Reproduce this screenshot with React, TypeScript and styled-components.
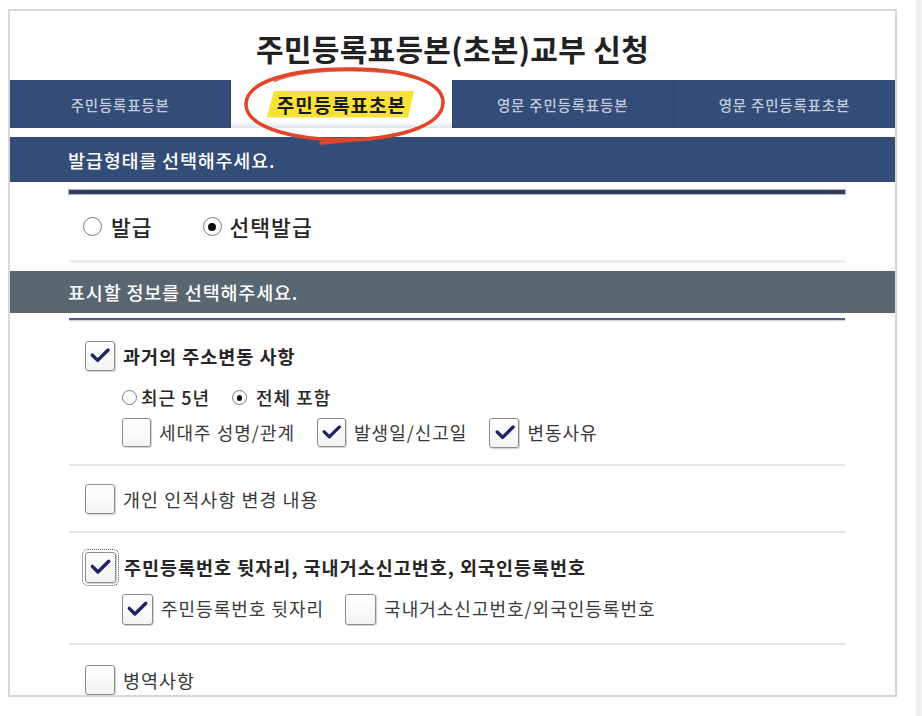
import styled, { createGlobalStyle } from "styled-components";

const GlobalStyle = createGlobalStyle`
  html, body {
    margin: 0;
    padding: 0;
    background: #fff;
  }
  body {
    font-family: "Noto Sans CJK KR", "Noto Sans", sans-serif;
    color: #333;
  }
`;

const Page = styled.div`
  width: 922px;
  height: 716px;
  display: flex;
  overflow: hidden;
  background: #fff;
`;

const Frame = styled.div`
  position: relative;
  box-sizing: border-box;
  margin: 9px 0 0 8px;
  width: 889px;
  height: 688px;
  border: 2px solid #d8d8d8;
  overflow: hidden;
  background: #fff;
`;

const ScrollStrip = styled.div`
  margin-left: 19px;
  width: 6px;
  height: 100%;
  background: #f1f1f1;
`;

const Title = styled.h1`
  margin: 0;
  box-sizing: border-box;
  height: 69px;
  padding-top: 4px;
  display: flex;
  align-items: center;
  justify-content: center;
  font-size: 30px;
  font-weight: 700;
  letter-spacing: 0.3px;
  color: #222;
`;

const Tabs = styled.div`
  display: grid;
  grid-template-columns: repeat(4, 1fr);
  height: 48px;
`;

const Tab = styled.div<{ $active?: boolean }>`
  display: flex;
  align-items: center;
  justify-content: center;
  font-size: 14.5px;
  font-weight: 500;
  letter-spacing: 0.8px;
  color: #c3cbd9;
  background: ${(p) => (p.$active ? "#fff" : "#344d78")};
  border-right: 1px solid #2d4470;
  box-shadow: ${(p) =>
    p.$active ? "inset 0 -7px 6px -5px #d3d9e3" : "none"};
  &:last-child {
    border-right: none;
  }
`;

const Highlight = styled.span`
  padding: 0 8px 0 10px;
  margin-left: -2px;
  background: #f8e23a;
  clip-path: polygon(5% 0, 100% 0, 96% 100%, 0 100%);
  color: #1b1b1b;
  font-size: 19px;
  font-weight: 700;
  letter-spacing: 1px;
`;

const CircleMark = styled.svg`
  position: absolute;
  left: 225px;
  top: 50px;
  width: 220px;
  height: 95px;
  pointer-events: none;
`;

const SectionBar = styled.div<{ $tone: "navy" | "slate" }>`
  box-sizing: border-box;
  height: ${(p) => (p.$tone === "navy" ? 45 : 42)}px;
  margin-top: ${(p) => (p.$tone === "navy" ? 9 : 8)}px;
  padding-left: 58px;
  display: flex;
  align-items: center;
  background: ${(p) => (p.$tone === "navy" ? "#344d78" : "#59656f")};
  color: #fff;
  font-size: 18.5px;
  font-weight: 500;
  letter-spacing: 0.8px;
`;

const Content = styled.div`
  margin: 0 50px 0 59px;
`;

const ThickRule = styled.div`
  margin-top: 8px;
  height: 4px;
  background: #2f3e5a;
  box-shadow: 0 0 1px 1px #b7becb;
`;

const NavyRule = styled.div`
  margin-top: 5px;
  height: 2px;
  background: #4a5f87;
  box-shadow: 0 1px 1px #c4cddc;
`;

const LightRule = styled.div`
  height: 3px;
  background: #ececec;
`;

const TypeRow = styled.div`
  height: 66px;
  padding-left: 14px;
  display: flex;
  align-items: center;
  gap: 50px;
`;

const Item = styled.div<{ $top: number; $bottom: number }>`
  display: flex;
  flex-direction: column;
  align-items: flex-start;
  padding: ${(p) => p.$top}px 0 ${(p) => p.$bottom}px 16px;
  border-bottom: 2px solid #e6e6e6;
  &:last-child {
    border-bottom: none;
  }
`;

const Option = styled.label<{ $gap: number }>`
  display: flex;
  align-items: center;
  gap: ${(p) => p.$gap}px;
  line-height: 1.2;
`;

const OptionText = styled.span<{ $size: number; $weight?: number }>`
  font-size: ${(p) => p.$size}px;
  font-weight: ${(p) => p.$weight ?? 400};
  letter-spacing: 1px;
  color: ${(p) => ((p.$weight ?? 400) > 400 ? "#262626" : "#3a3a3a")};
`;

const SubOptions = styled.div`
  padding-left: 37px;
  display: flex;
  flex-direction: column;
`;

const SubRow = styled.div<{ $top: number; $gap: number }>`
  margin-top: ${(p) => p.$top}px;
  display: flex;
  align-items: center;
  gap: ${(p) => p.$gap}px;
`;

const Box = styled.span<{ $size: number; $focus?: boolean }>`
  box-sizing: border-box;
  flex: none;
  width: ${(p) => p.$size}px;
  height: ${(p) => p.$size}px;
  border: 1.5px solid #8c8c8c;
  border-radius: 3px;
  background: linear-gradient(#ffffff, #f4f4f4);
  box-shadow: 1px 1px 1px #d0d0d0;
  display: flex;
  align-items: center;
  justify-content: center;
  outline: ${(p) => (p.$focus ? "1.5px dotted #555" : "none")};
  outline-offset: 2px;
  svg {
    width: 78%;
    height: 78%;
  }
`;

const RadioDot = styled.span<{ $size: number; $on?: boolean }>`
  box-sizing: border-box;
  flex: none;
  width: ${(p) => p.$size}px;
  height: ${(p) => p.$size}px;
  border-radius: 50%;
  border: 1.5px solid #7a7a7a;
  background: #fff;
  display: flex;
  align-items: center;
  justify-content: center;
  &::after {
    content: "";
    display: ${(p) => (p.$on ? "block" : "none")};
    width: 46%;
    height: 46%;
    border-radius: 50%;
    background: #111;
  }
`;

function Check() {
  return (
    <svg viewBox="0 0 24 24">
      <path
        d="M3.5 11 L9.5 17 L21 5.5"
        fill="none"
        stroke="#1d2461"
        strokeWidth="3.6"
        strokeLinecap="round"
        strokeLinejoin="round"
      />
    </svg>
  );
}

function CheckItem({
  size,
  checked,
  focus,
  text,
  textSize,
  weight,
}: {
  size: number;
  checked?: boolean;
  focus?: boolean;
  text: string;
  textSize: number;
  weight?: number;
}) {
  return (
    <Option $gap={8}>
      <Box $size={size} $focus={focus}>
        {checked && <Check />}
      </Box>
      <OptionText $size={textSize} $weight={weight}>
        {text}
      </OptionText>
    </Option>
  );
}

function RadioItem({
  size,
  on,
  text,
  textSize,
  gap,
}: {
  size: number;
  on?: boolean;
  text: string;
  textSize: number;
  gap: number;
}) {
  return (
    <Option $gap={gap}>
      <RadioDot $size={size} $on={on} />
      <OptionText $size={textSize} $weight={500}>
        {text}
      </OptionText>
    </Option>
  );
}

export default function App() {
  return (
    <>
      <GlobalStyle />
      <Page>
        <Frame>
          <Title>주민등록표등본(초본)교부 신청</Title>
          <Tabs>
            <Tab>주민등록표등본</Tab>
            <Tab $active>
              <Highlight>주민등록표초본</Highlight>
            </Tab>
            <Tab>영문 주민등록표등본</Tab>
            <Tab>영문 주민등록표초본</Tab>
          </Tabs>

          <SectionBar $tone="navy">발급형태를 선택해주세요.</SectionBar>
          <Content>
            <ThickRule />
            <TypeRow>
              <RadioItem size={19} text="발급" textSize={21.5} gap={9} />
              <RadioItem size={19} on text="선택발급" textSize={21.5} gap={8} />
            </TypeRow>
            <LightRule />
          </Content>

          <SectionBar $tone="slate">표시할 정보를 선택해주세요.</SectionBar>
          <Content>
            <NavyRule />
            <Item $top={21} $bottom={16}>
              <CheckItem size={30} checked text="과거의 주소변동 사항" textSize={18.5} weight={600} />
              <SubOptions>
                <SubRow $top={16} $gap={22}>
                  <RadioItem size={15} text="최근 5년" textSize={18} gap={4} />
                  <RadioItem size={15} on text="전체 포함" textSize={18} gap={9} />
                </SubRow>
                <SubRow $top={9} $gap={22}>
                  <CheckItem size={29} text="세대주 성명/관계" textSize={18} />
                  <CheckItem size={29} checked text="발생일/신고일" textSize={18} />
                  <CheckItem size={30} checked text="변동사유" textSize={18} />
                </SubRow>
              </SubOptions>
            </Item>
            <Item $top={18} $bottom={17}>
              <CheckItem size={30} text="개인 인적사항 변경 내용" textSize={18.5} />
            </Item>
            <Item $top={19} $bottom={18}>
              <CheckItem
                size={31}
                checked
                focus
                text="주민등록번호 뒷자리, 국내거소신고번호, 외국인등록번호"
                textSize={18.5}
                weight={600}
              />
              <SubOptions>
                <SubRow $top={11} $gap={21}>
                  <CheckItem size={31} checked text="주민등록번호 뒷자리" textSize={18} />
                  <CheckItem size={31} text="국내거소신고번호/외국인등록번호" textSize={18} />
                </SubRow>
              </SubOptions>
            </Item>
            <Item $top={20} $bottom={10}>
              <CheckItem size={30} text="병역사항" textSize={18.5} />
            </Item>
          </Content>

          <CircleMark viewBox="0 0 220 95">
            <path
              d="M120 78 C62 81 12 67 11 44 C10 20 58 8 112 8 C166 7 209 20 208 42 C207 63 172 76 118 79 L86 82"
              fill="none"
              stroke="#e0462a"
              strokeWidth="3.6"
              strokeLinecap="round"
            />
            <path
              d="M40 20 C70 7 150 5 190 20"
              fill="none"
              stroke="#e0462a"
              strokeWidth="2"
              strokeLinecap="round"
              opacity="0.8"
            />
          </CircleMark>
        </Frame>
        <ScrollStrip />
      </Page>
    </>
  );
}
